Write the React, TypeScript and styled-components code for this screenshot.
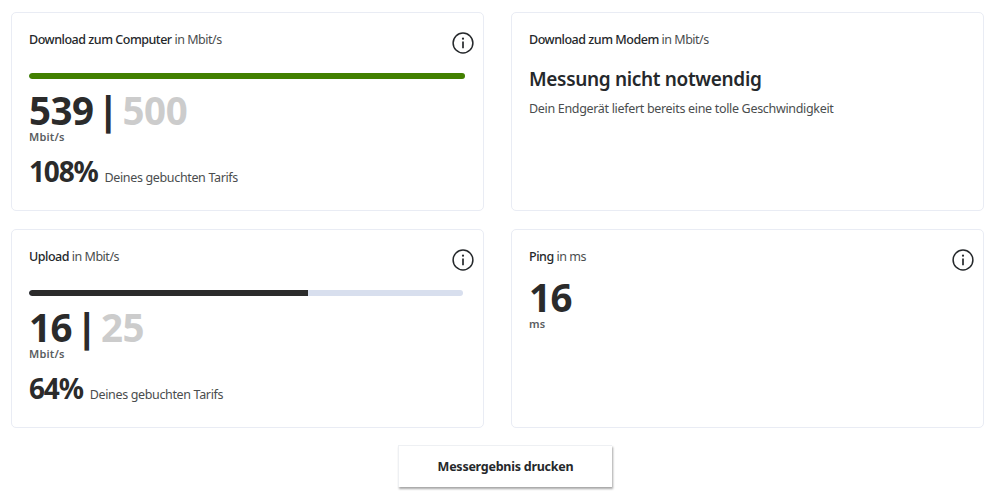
import React from "react";
import styled, { createGlobalStyle } from "styled-components";

const Global = createGlobalStyle`
  html, body { margin: 0; padding: 0; background: #fff; }
  body { font-family: "Noto Sans", "Open Sans", "Liberation Sans", sans-serif; color: #25282b; }
`;

const Page = styled.div`
  width: 998px;
  height: 500px;
  box-sizing: border-box;
  padding: 12px 0 0 11px;
  overflow: hidden;
`;

const Grid = styled.div`
  display: grid;
  grid-template-columns: 473px 473px;
  grid-auto-rows: 199px;
  column-gap: 27px;
  row-gap: 18px;
`;

const Card = styled.section`
  position: relative;
  box-sizing: border-box;
  border: 1px solid #e9ecf4;
  border-radius: 5px;
  background: #fff;
  padding: 18px 17px 0;
`;

const Title = styled.div`
  font-size: 12.5px;
  line-height: 18px;
  letter-spacing: -0.48px;
  color: #4a4d4e;
  strong {
    font-weight: 500;
    color: #25282b;
  }
`;

const InfoButton = styled.span`
  position: absolute;
  top: 19px;
  right: 9px;
  width: 22px;
  height: 22px;
  color: #25282b;
`;

const Track = styled.div<{ $w: number }>`
  width: ${(p) => p.$w}px;
  height: 6px;
  margin-top: 24px;
  border-radius: 3px;
  background: #d8dfee;
  overflow: hidden;
`;

const Fill = styled.div<{ $color: string }>`
  height: 100%;
  border-radius: 3px 0 0 3px;
  background: ${(p) => p.$color};
`;

const Speed = styled.div`
  margin-top: 11px;
  font-size: 38.5px;
  line-height: 40px;
  height: 40px;
  font-weight: 700;
  letter-spacing: -0.5px;
  color: #2b2b2b;
  white-space: nowrap;
`;

const Separator = styled.span`
  margin: 0 -5px;
  font-weight: 800;
`;

const Booked = styled.span`
  color: #cccccc;
`;

const Unit = styled.div`
  margin-top: 1px;
  font-size: 11px;
  line-height: 12px;
  font-weight: 600;
  letter-spacing: 0.2px;
  color: #5a5d5f;
`;

const Percent = styled.div`
  display: flex;
  align-items: baseline;
  gap: 7px;
  margin-top: 10px;
`;

const PercentValue = styled.span`
  font-size: 28px;
  line-height: 36px;
  font-weight: 700;
  letter-spacing: -1.2px;
  color: #2b2b2b;
`;

const PercentLabel = styled.span`
  font-size: 12.5px;
  letter-spacing: -0.35px;
  color: #4a4d4e;
`;

const Headline = styled.h2`
  margin: 17px 0 0;
  font-size: 19px;
  line-height: 27px;
  font-weight: 600;
  letter-spacing: -0.33px;
  color: #25282b;
`;

const Sub = styled.p`
  margin: 7px 0 0;
  font-size: 12.5px;
  line-height: 18px;
  letter-spacing: -0.32px;
  color: #4a4d4e;
`;

const Actions = styled.div`
  display: flex;
  justify-content: center;
  margin: 17px 0 0 -5px;
  width: 998px;
`;

const PrintButton = styled.button`
  width: 214px;
  height: 42px;
  border: 0;
  border-top: 1px solid #eef0f3;
  border-left: 1px solid #eef0f3;
  background: #fff;
  box-shadow: 1px 2px 2px rgba(0, 0, 0, 0.35);
  font-family: inherit;
  font-size: 12.5px;
  font-weight: 700;
  letter-spacing: -0.25px;
  color: #25282b;
`;

const InfoIcon = () => (
  <svg width="22" height="22" viewBox="0 0 22 22" fill="none">
    <circle cx="11" cy="11" r="9.9" stroke="currentColor" strokeWidth="1.5" />
    <circle cx="11" cy="6.7" r="1.1" fill="currentColor" />
    <path d="M11 9.6v6.6" stroke="currentColor" strokeWidth="1.7" />
  </svg>
);

type MeterProps = {
  title: string;
  actual: string;
  booked: string;
  percent: string;
  fill: number;
  color: string;
  trackWidth: number;
};

const Meter = ({ title, actual, booked, percent, fill, color, trackWidth }: MeterProps) => (
  <Card>
    <Title>
      <strong>{title}</strong> in Mbit/s
    </Title>
    <InfoButton>
      <InfoIcon />
    </InfoButton>
    <Track $w={trackWidth}>
      <Fill $color={color} style={{ width: `${fill}%` }} />
    </Track>
    <Speed>
      {actual} <Separator>|</Separator> <Booked>{booked}</Booked>
    </Speed>
    <Unit>Mbit/s</Unit>
    <Percent>
      <PercentValue>{percent}</PercentValue>
      <PercentLabel>Deines gebuchten Tarifs</PercentLabel>
    </Percent>
  </Card>
);

export default function App() {
  return (
    <Page>
      <Global />
      <Grid>
        <Meter
          title="Download zum Computer"
          actual="539"
          booked="500"
          percent="108%"
          fill={100}
          color="#428000"
          trackWidth={436}
        />
        <Card>
          <Title>
            <strong>Download zum Modem</strong> in Mbit/s
          </Title>
          <Headline>Messung nicht notwendig</Headline>
          <Sub>Dein Endgerät liefert bereits eine tolle Geschwindigkeit</Sub>
        </Card>
        <Meter
          title="Upload"
          actual="16"
          booked="25"
          percent="64%"
          fill={64.2}
          color="#2b2b2b"
          trackWidth={434}
        />
        <Card>
          <Title>
            <strong>Ping</strong> in ms
          </Title>
          <InfoButton>
            <InfoIcon />
          </InfoButton>
          <Speed>16</Speed>
          <Unit>ms</Unit>
        </Card>
      </Grid>
      <Actions>
        <PrintButton>Messergebnis drucken</PrintButton>
      </Actions>
    </Page>
  );
}
